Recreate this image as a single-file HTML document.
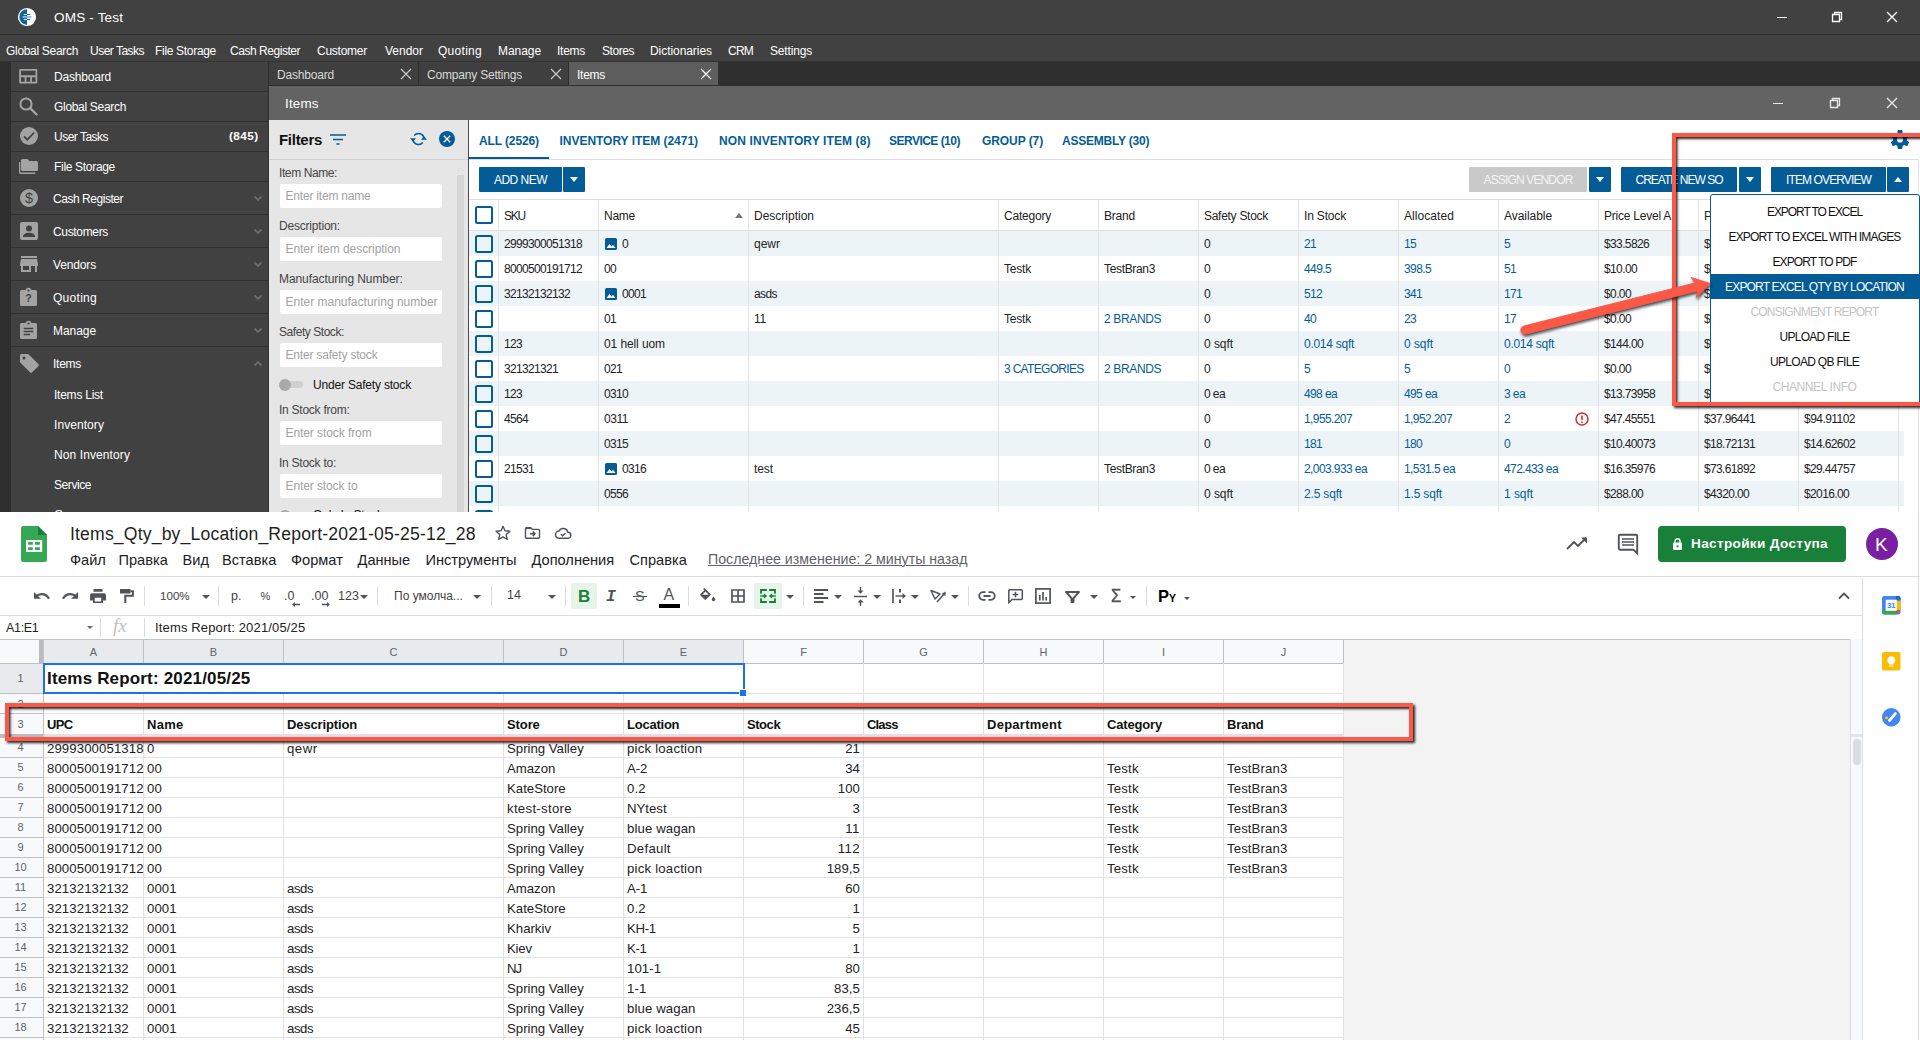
<!DOCTYPE html><html lang="en"><head><meta charset="utf-8"><title>OMS Items - Export Qty by Location</title><style>

*{box-sizing:border-box;margin:0;padding:0}
html,body{width:1920px;height:1040px;overflow:hidden;background:#fff}
body{font-family:"Liberation Sans",sans-serif;font-size:11.5px;color:#000;position:relative}
.a{position:absolute}
.t{position:absolute;white-space:nowrap;line-height:1}
svg{position:absolute;overflow:visible}
/* ---------- OMS ---------- */
#oms{left:0;top:0;width:1920px;height:512px;background:#2f2f2f;overflow:hidden}
#tbar{left:0;top:0;width:1920px;height:34px;background:#414141}
#mbar{left:0;top:35px;width:1920px;height:26px;background:#414141}
#mline{left:0;top:61px;width:1920px;height:1px;background:#333}
#mbar .t{top:10px;color:#fff;font-size:12px}
#side{left:11px;top:62px;width:257px;height:460px;background:#414141}
#side .sep{position:absolute;left:0;width:257px;height:1px;background:#313131}
#side .t{color:#fff;font-size:12px}
.tab{position:absolute;top:62px;height:23px;width:149px;background:#3f3f3f;color:#d8d8d8;font-size:12px}
.tab.sel{background:#5d5d5d;color:#fff}
.tab .t{left:8px;top:6.5px}
#wtitle{left:269px;top:86px;width:1651px;height:34px;background:#636363}
#filt{left:269px;top:120px;width:199px;height:400px;background:#e6e6e6}
#filt .lbl{color:#444;font-size:12px}
#filt .inp{position:absolute;left:11px;width:162px;height:24px;background:#fff;border-radius:2px}
#filt .inp .t{left:5.5px;top:6px;color:#a2a2a2;font-size:12px}
#main{left:469px;top:120px;width:1451px;height:400px;background:#fff}
.itab{color:#045c96;font-weight:bold;font-size:12px;top:14.7px}
.btn{position:absolute;top:47px;height:25px;background:#045c96;color:#fff;border-radius:1px;font-size:12px;text-align:center;line-height:26.5px;white-space:nowrap}
.btn.dis{background:#c9c9c9;color:#f4f4f4}
.row{position:absolute;left:0;width:1435px;height:25px}
.row.alt{background:#edf4f8}
.row .t{top:7.2px;font-size:12px;color:#222}
.hrow .t{font-size:12px;color:#222}
.row .t.b{color:#045c96}
.cb{position:absolute;left:6px;top:4px;width:18px;height:18px;border:2px solid #045c96;border-radius:2.5px}
.vl{position:absolute;width:1px;background:#e3e3e3}
.mi{position:absolute;left:-1.5px;width:210px;height:25px;text-align:center;line-height:26.4px;font-size:12px;color:#111;white-space:nowrap}
.mi.dis{color:#c4c4c4}
.mi.sel{background:#045c96;color:#fff}
/* ---------- Sheets ---------- */
#gs{left:0;top:512px;width:1920px;height:528px;background:#fff;overflow:hidden}
#gs .menu .t{top:41px;font-size:14.6px;color:#202124}
.hl{position:absolute;height:1px;background:#dadce0}
.gvl{position:absolute;width:1px;background:#e1e1e1}
.ghl{position:absolute;height:1px;background:#e1e1e1}
.ch{position:absolute;top:128px;height:23px;background:#f8f9fa;border-right:1px solid #c0c0c0;color:#5f6368;font-size:11px;text-align:center;line-height:24px}
.ch.s{background:#e8eaed}
.rh{position:absolute;left:0;width:43px;padding-right:2px;background:#f8f9fa;border-bottom:1px solid #c0c0c0;color:#5f6368;font-size:11px;text-align:center}
.c{position:absolute;white-space:nowrap;line-height:1;font-size:13.2px;color:#222}
.c.r{text-align:right}
.c.h{font-weight:bold;color:#111;font-size:13px}

</style></head><body>
<div id="oms" class="a">
<div id="tbar" class="a"></div>
<svg style="left:18px;top:8px" width="18" height="18" viewBox="0 0 18 18"><circle cx="9" cy="9" r="9.1" fill="#fff"/><path d="M9 1.3A7.7 7.7 0 0 0 9 16.7z" fill="#0a64a0"/><path d="M5.8 6.1h3.2v1h-3.2zM4.6 8.4h4.4v1.2h-4.4zM5.8 11.1h3.2v1h-3.2z" fill="#fff"/><path d="M9 6.1h3.2v1H9zM9 11.1h3.2v1H9z" fill="#0a64a0"/><path d="M9 8.4h4.4v1.2H9z" fill="#4d8fbd"/></svg>
<div class="t" style="letter-spacing:0.14px;left:54px;top:11px;color:#fff;font-size:13.6px">OMS - Test</div>
<div class="a" style="left:1777px;top:17px;width:10px;height:1.4px;background:#fff"></div><svg style="left:1832px;top:12px" width="10" height="10" viewBox="0 0 10 10"><path d="M0.5 2.5h7v7h-7zM2.5 2.5v-2h7v7h-2" fill="none" stroke="#fff" stroke-width="1.3"/></svg><svg style="left:1887px;top:12px" width="10" height="10" viewBox="0 0 10 10"><path d="M0 0L10 10M10 0L0 10" stroke="#fff" stroke-width="1.4"/></svg>
<div id="mline" class="a"></div>
<div id="mbar" class="a">
<div class="t" style="letter-spacing:-0.31px;left:6px;top:10px;">Global Search</div>
<div class="t" style="letter-spacing:-0.51px;left:90px;top:10px;">User Tasks</div>
<div class="t" style="letter-spacing:-0.31px;left:155px;top:10px;">File Storage</div>
<div class="t" style="letter-spacing:-0.46px;left:230px;top:10px;">Cash Register</div>
<div class="t" style="letter-spacing:-0.25px;left:317px;top:10px;">Customer</div>
<div class="t" style="left:385px;top:10px;">Vendor</div>
<div class="t" style="letter-spacing:0.28px;left:438px;top:10px;">Quoting</div>
<div class="t" style="letter-spacing:-0.06px;left:498px;top:10px;">Manage</div>
<div class="t" style="letter-spacing:-0.27px;left:557px;top:10px;">Items</div>
<div class="t" style="letter-spacing:-0.45px;left:602px;top:10px;">Stores</div>
<div class="t" style="letter-spacing:-0.06px;left:650px;top:10px;">Dictionaries</div>
<div class="t" style="letter-spacing:-0.78px;left:728px;top:10px;">CRM</div>
<div class="t" style="letter-spacing:-0.17px;left:770px;top:10px;">Settings</div>
</div>
<div id="side" class="a">
<svg style="left:8.25px;top:6.75px" width="18.5" height="14.5" viewBox="0 0 20 16"><path fill="#a3a3a3" d="M1.5 0h17A1.5 1.5 0 0 1 20 1.5v13a1.5 1.5 0 0 1-1.5 1.5h-17A1.5 1.5 0 0 1 0 14.5v-13A1.5 1.5 0 0 1 1.5 0zM2 2v5h16V2zM2 9v5h4V9zM8 9v5h4V9zM14 9v5h4V9z" fill-rule="evenodd"/></svg>
<div class="t" style="letter-spacing:-0.19px;left:43px;top:8.7px;">Dashboard</div>
<svg style="left:8px;top:34.5px" width="19" height="19" viewBox="0 0 19 19"><circle cx="7" cy="7" r="5.6" fill="none" stroke="#a3a3a3" stroke-width="2"/><path d="M11.2 11.2L17.5 17.5" stroke="#a3a3a3" stroke-width="2.4" stroke-linecap="round"/></svg>
<div class="t" style="letter-spacing:-0.31px;left:43px;top:38.7px;">Global Search</div>
<svg style="left:8.5px;top:65px" width="18" height="18" viewBox="0 0 18 18"><circle cx="9" cy="9" r="9" fill="#a3a3a3"/><path d="M3.9 9.3l3.4 3.4 6.9-7.2" fill="none" stroke="#414141" stroke-width="1.7"/></svg>
<div class="t" style="letter-spacing:-0.51px;left:43px;top:68.7px;">User Tasks</div>
<svg style="left:8px;top:96.5px" width="19" height="15" viewBox="0 0 19 15"><path fill="#a3a3a3" d="M3.5 0h5l2 2h7A1.5 1.5 0 0 1 19 3.5v7A1.5 1.5 0 0 1 17.5 12h-14A1.5 1.5 0 0 1 2 10.5v-9A1.5 1.5 0 0 1 3.5 0z"/><path fill="#a3a3a3" d="M0 3h1.3v10.5h15V15h-15A1.5 1.5 0 0 1 0 13.5z"/></svg>
<div class="t" style="letter-spacing:-0.31px;left:43px;top:98.7px;">File Storage</div>
<svg style="left:8.5px;top:127px" width="18" height="18" viewBox="0 0 18 18"><circle cx="9" cy="9" r="9" fill="#a3a3a3"/><text x="9" y="14" text-anchor="middle" font-family="Liberation Sans,sans-serif" font-size="14.5" fill="#414141">$</text></svg>
<div class="t" style="letter-spacing:-0.46px;left:42px;top:130.7px;">Cash Register</div>
<svg style="left:242.5px;top:134px" width="8" height="5" viewBox="0 0 8 5"><path d="M0.5 0.5L4 4L7.5 0.5" fill="none" stroke="#6b6b6b" stroke-width="1.9"/></svg>
<svg style="left:8.5px;top:160px" width="18" height="18" viewBox="0 0 18 18"><rect width="18" height="18" rx="2" fill="#a3a3a3"/><circle cx="9" cy="6.5" r="3" fill="#404040"/><path d="M3 15c0-3 3-4.2 6-4.2s6 1.2 6 4.2z" fill="#404040"/></svg>
<div class="t" style="letter-spacing:-0.34px;left:42px;top:163.7px;">Customers</div>
<svg style="left:242.5px;top:167px" width="8" height="5" viewBox="0 0 8 5"><path d="M0.5 0.5L4 4L7.5 0.5" fill="none" stroke="#6b6b6b" stroke-width="1.9"/></svg>
<svg style="left:8.5px;top:194px" width="18" height="16" viewBox="0 0 18 16"><path fill="#a3a3a3" d="M1 0h16v2H1zM0 8l1-5h16l1 5v2h-1v6h-2v-6h-4v6H1v-6H0zM3 10v4h6v-4z" fill-rule="evenodd"/></svg>
<div class="t" style="letter-spacing:-0.15px;left:42px;top:196.7px;">Vendors</div>
<svg style="left:242.5px;top:200px" width="8" height="5" viewBox="0 0 8 5"><path d="M0.5 0.5L4 4L7.5 0.5" fill="none" stroke="#6b6b6b" stroke-width="1.9"/></svg>
<svg style="left:9px;top:226px" width="17" height="18" viewBox="0 0 16 18" preserveAspectRatio="none"><path fill="#a3a3a3" d="M1.5 2H5.2a2.9 2.9 0 0 1 5.6 0H14.5A1.5 1.5 0 0 1 16 3.5v13A1.5 1.5 0 0 1 14.5 18h-13A1.5 1.5 0 0 1 0 16.5v-13A1.5 1.5 0 0 1 1.5 2z"/><text x="8" y="14.5" text-anchor="middle" font-family="Liberation Sans,sans-serif" font-weight="bold" font-size="10" fill="#404040">?</text><circle cx="8" cy="2.4" r="1" fill="#404040"/></svg>
<div class="t" style="letter-spacing:0.28px;left:42px;top:229.7px;">Quoting</div>
<svg style="left:242.5px;top:233px" width="8" height="5" viewBox="0 0 8 5"><path d="M0.5 0.5L4 4L7.5 0.5" fill="none" stroke="#6b6b6b" stroke-width="1.9"/></svg>
<svg style="left:9px;top:259px" width="17" height="18" viewBox="0 0 16 18" preserveAspectRatio="none"><path fill="#a3a3a3" d="M1.5 2H5.2a2.9 2.9 0 0 1 5.6 0H14.5A1.5 1.5 0 0 1 16 3.5v13A1.5 1.5 0 0 1 14.5 18h-13A1.5 1.5 0 0 1 0 16.5v-13A1.5 1.5 0 0 1 1.5 2z"/><path d="M3.5 7.5h9M3.5 10.5h9M3.5 13.5h6" stroke="#404040" stroke-width="1.6"/><circle cx="8" cy="2.4" r="1" fill="#404040"/></svg>
<div class="t" style="letter-spacing:-0.06px;left:42px;top:262.7px;">Manage</div>
<svg style="left:242.5px;top:266px" width="8" height="5" viewBox="0 0 8 5"><path d="M0.5 0.5L4 4L7.5 0.5" fill="none" stroke="#6b6b6b" stroke-width="1.9"/></svg>
<svg style="left:8.75px;top:291.5px" width="19" height="19" viewBox="0 0 19 19"><path fill="#a3a3a3" d="M1.5 0h6.2a1.5 1.5 0 0 1 1.06.440l9.6 9.6a1.5 1.5 0 0 1 0 2.12l-6.2 6.2a1.5 1.5 0 0 1-2.12 0l-9.6-9.6A1.5 1.5 0 0 1 0 7.7V1.5A1.5 1.5 0 0 1 1.5 0z"/><circle cx="4" cy="4" r="1.5" fill="#404040"/></svg>
<div class="t" style="letter-spacing:-0.27px;left:42px;top:295.7px;">Items</div>
<svg style="left:242.5px;top:299px" width="8" height="5" viewBox="0 0 8 5"><path d="M0.5 4.5L4 1L7.5 4.5" fill="none" stroke="#6b6b6b" stroke-width="1.9"/></svg>
<div class="t" style="letter-spacing:0.39px;left:218px;top:68.5px;font-weight:bold;font-size:11.8px">(845)</div>
<div class="sep" style="top:29px"></div>
<div class="sep" style="top:59px"></div>
<div class="sep" style="top:89px"></div>
<div class="sep" style="top:119px"></div>
<div class="sep" style="top:152px"></div>
<div class="sep" style="top:185px"></div>
<div class="sep" style="top:218px"></div>
<div class="sep" style="top:251px"></div>
<div class="sep" style="top:284px"></div>
<div class="t" style="letter-spacing:-0.24px;left:43px;top:326.7px;">Items List</div>
<div class="t" style="letter-spacing:0.07px;left:43px;top:356.7px;">Inventory</div>
<div class="t" style="letter-spacing:0.10px;left:43px;top:386.7px;">Non Inventory</div>
<div class="t" style="letter-spacing:-0.43px;left:43px;top:416.7px;">Service</div>
<div class="t" style="letter-spacing:-0.07px;left:43px;top:446.7px;">Group</div>
</div>
<div class="tab" style="left:269px"><div class="t" style="letter-spacing:-0.19px;">Dashboard</div><svg style="left:132px;top:7px" width="10" height="10" viewBox="0 0 10 10"><path d="M0 0L10 10M10 0L0 10" stroke="#c8c8c8" stroke-width="1.2"/></svg></div>
<div class="tab" style="left:419px"><div class="t" style="letter-spacing:-0.19px;">Company Settings</div><svg style="left:132px;top:7px" width="10" height="10" viewBox="0 0 10 10"><path d="M0 0L10 10M10 0L0 10" stroke="#c8c8c8" stroke-width="1.2"/></svg></div>
<div class="tab sel" style="left:569px"><div class="t" style="letter-spacing:-0.27px;">Items</div><svg style="left:132px;top:7px" width="10" height="10" viewBox="0 0 10 10"><path d="M0 0L10 10M10 0L0 10" stroke="#fff" stroke-width="1.2"/></svg></div>
<div id="wtitle" class="a"><div class="t" style="letter-spacing:0.20px;left:16px;top:11px;color:#fff;font-size:13.4px">Items</div></div>
<div class="a" style="left:1773px;top:103px;width:10px;height:1.4px;background:#e8e8e8"></div><svg style="left:1830px;top:98px" width="10" height="10" viewBox="0 0 10 10"><path d="M0.5 2.5h7v7h-7zM2.5 2.5v-2h7v7h-2" fill="none" stroke="#e8e8e8" stroke-width="1.3"/></svg><svg style="left:1887px;top:98px" width="10" height="10" viewBox="0 0 10 10"><path d="M0 0L10 10M10 0L0 10" stroke="#e8e8e8" stroke-width="1.4"/></svg>
<div id="filt" class="a">
<div class="t" style="letter-spacing:-0.29px;left:10px;top:12px;font-weight:bold;font-size:15px;color:#111">Filters</div>
<svg style="left:61px;top:13.7px" width="16" height="11" viewBox="0 0 16 11"><path d="M0 1h16M3 5.5h10M6.5 10h3" stroke="#045c96" stroke-width="1.7"/></svg>
<svg style="left:141px;top:11px" width="17" height="16" viewBox="0 0 17 16"><g transform="translate(0 16) scale(1 -1)"><path d="M3 8a5.5 5.5 0 0 1 9.8-3.4M14 8a5.5 5.5 0 0 1-9.8 3.4" fill="none" stroke="#045c96" stroke-width="1.6"/><path d="M0 8.8L3 5.2l3 3.6zM11 7.2L14 10.8l3-3.6z" fill="#045c96"/></g></svg>
<svg style="left:170px;top:11px" width="16" height="16" viewBox="0 0 16 16"><circle cx="8" cy="8" r="8" fill="#045c96"/><path d="M4.8 4.8l6.4 6.4M11.2 4.8l-6.4 6.4" stroke="#fff" stroke-width="1.3"/></svg>
<div class="a" style="left:0;top:39px;width:199px;height:1px;background:#d2d2d2"></div>
<div class="a" style="left:188px;top:55px;width:7px;height:345px;background:#d6d6d6"></div>
<svg style="left:188px;top:47px" width="7" height="4" viewBox="0 0 7 4"><path d="M0 4L3.5 0.5L7 4" fill="none" stroke="#dcdcdc" stroke-width="1"/></svg>
<div class="t lbl" style="letter-spacing:-0.40px;left:10px;top:46.6px;">Item Name:</div>
<div class="inp" style="top:64px"><div class="t" style="letter-spacing:-0.20px;">Enter item name</div></div>
<div class="t lbl" style="letter-spacing:-0.20px;left:10px;top:99.6px;">Description:</div>
<div class="inp" style="top:117px"><div class="t" style="letter-spacing:-0.05px;">Enter item description</div></div>
<div class="t lbl" style="letter-spacing:-0.08px;left:10px;top:152.6px;">Manufacturing Number:</div>
<div class="inp" style="top:170px"><div class="t">Enter manufacturing number</div></div>
<div class="t lbl" style="letter-spacing:-0.45px;left:10px;top:205.6px;">Safety Stock:</div>
<div class="inp" style="top:223px"><div class="t" style="letter-spacing:-0.19px;">Enter safety stock</div></div>
<div class="a" style="left:12px;top:261px;width:22px;height:7px;border-radius:4px;background:#cfcfcf"></div>
<div class="a" style="left:10px;top:258.5px;width:12px;height:12px;border-radius:6px;background:#aaa"></div>
<div class="t" style="letter-spacing:-0.19px;left:44px;top:259px;font-size:12px;color:#111">Under Safety stock</div>
<div class="t lbl" style="letter-spacing:-0.25px;left:10px;top:283.6px;">In Stock from:</div>
<div class="inp" style="top:301px"><div class="t" style="letter-spacing:-0.08px;">Enter stock from</div></div>
<div class="t lbl" style="letter-spacing:-0.25px;left:10px;top:336.6px;">In Stock to:</div>
<div class="inp" style="top:354px"><div class="t" style="letter-spacing:-0.10px;">Enter stock to</div></div>
<div class="a" style="left:12px;top:392px;width:22px;height:7px;border-radius:4px;background:#cfcfcf"></div>
<div class="a" style="left:10px;top:389.5px;width:12px;height:12px;border-radius:6px;background:#aaa"></div>
<div class="t" style="letter-spacing:-0.11px;left:44px;top:389.3px;font-size:12px;color:#111">Only In Stock</div>
</div>
<div id="main" class="a">
<div class="a" style="left:-1px;top:0;width:1px;height:400px;background:#4a4a4a"></div>
<div class="t itab" style="letter-spacing:-0.12px;left:10px;top:14.7px;">ALL (2526)</div>
<div class="t itab" style="letter-spacing:-0.03px;left:90.5px;top:14.7px;">INVENTORY ITEM (2471)</div>
<div class="t itab" style="letter-spacing:0.11px;left:250px;top:14.7px;">NON INVENTORY ITEM (8)</div>
<div class="t itab" style="letter-spacing:-0.52px;left:420px;top:14.7px;">SERVICE (10)</div>
<div class="t itab" style="letter-spacing:-0.08px;left:513px;top:14.7px;">GROUP (7)</div>
<div class="t itab" style="letter-spacing:-0.22px;left:593px;top:14.7px;">ASSEMBLY (30)</div>
<div class="a" style="left:0;top:39px;width:1450px;height:1px;background:#dedede"></div>
<div class="a" style="left:1449px;top:39px;width:1px;height:361px;background:#e2e2e2"></div>
<div class="a" style="left:0;top:37px;width:80px;height:2px;background:#045c96"></div>
<svg style="left:1422px;top:10px" width="18" height="19" viewBox="-9 -9.5 18 19"><g fill="#045c96"><rect x="-2.5" y="-9.5" width="5" height="19" rx="1.2" transform="rotate(0)"/><rect x="-2.5" y="-9.5" width="5" height="19" rx="1.2" transform="rotate(60)"/><rect x="-2.5" y="-9.5" width="5" height="19" rx="1.2" transform="rotate(120)"/><circle r="7"/></g><circle r="3.1" fill="#fff"/></svg>
<div class="btn" style="letter-spacing:-0.52px;left:10px;width:83px">ADD NEW</div>
<div class="btn" style="left:94px;width:22px"></div>
<svg style="left:101px;top:57px" width="8" height="5" viewBox="0 0 8 5"><path d="M0 0L4 5L8 0z" fill="#fff"/></svg>
<div class="btn dis" style="letter-spacing:-0.85px;left:1000px;width:118px">ASSIGN VENDOR</div>
<div class="btn" style="left:1120px;width:22px"></div>
<svg style="left:1127px;top:57px" width="8" height="5" viewBox="0 0 8 5"><path d="M0 0L4 5L8 0z" fill="#fff"/></svg>
<div class="btn" style="letter-spacing:-0.98px;left:1152px;width:116px">CREATE NEW SO</div>
<div class="btn" style="left:1270px;width:22px"></div>
<svg style="left:1277px;top:57px" width="8" height="5" viewBox="0 0 8 5"><path d="M0 0L4 5L8 0z" fill="#fff"/></svg>
<div class="btn" style="letter-spacing:-0.88px;left:1302px;width:115px">ITEM OVERVIEW</div>
<div class="btn" style="left:1418px;width:22px"></div>
<svg style="left:1425px;top:57px" width="8" height="5" viewBox="0 0 8 5"><path d="M0 5L4 0L8 5z" fill="#fff"/></svg>
<div class="a" style="left:0;top:79px;width:1449px;height:1px;background:#dedede"></div>
<div class="a" style="left:0;top:110px;width:1449px;height:1px;background:#dedede"></div>
<div class="hrow a" style="left:0;top:80px;width:1449px;height:30px">
<div class="cb" style="top:6px"></div>
<div class="t" style="letter-spacing:-1.20px;left:35px;top:9.8px;">SKU</div>
<div class="t" style="letter-spacing:-0.25px;left:135px;top:9.8px;">Name</div>
<div class="t" style="left:285px;top:9.8px;">Description</div>
<div class="t" style="letter-spacing:-0.21px;left:535px;top:9.8px;">Category</div>
<div class="t" style="letter-spacing:-0.21px;left:635px;top:9.8px;">Brand</div>
<div class="t" style="letter-spacing:-0.28px;left:735px;top:9.8px;">Safety Stock</div>
<div class="t" style="letter-spacing:-0.17px;left:835px;top:9.8px;">In Stock</div>
<div class="t" style="letter-spacing:0.07px;left:935px;top:9.8px;">Allocated</div>
<div class="t" style="letter-spacing:-0.05px;left:1035px;top:9.8px;">Available</div>
<div class="t" style="letter-spacing:-0.23px;left:1135px;top:9.8px;">Price Level A</div>
<div class="t" style="letter-spacing:-1.02px;left:1235px;top:9.8px;">P</div>
<svg style="left:266px;top:12.5px" width="8" height="5" viewBox="0 0 8 5"><path d="M0 5L4 0L8 5z" fill="#777"/></svg>
</div>
<div class="row alt" style="top:111px"><div class="cb"></div>
<div class="t" style="letter-spacing:-0.67px;left:35px;top:7.2px;">2999300051318</div>
<svg style="left:136px;top:6.5px" width="12" height="12" viewBox="0 0 12 12"><rect width="12" height="12" rx="1.5" fill="#045c96"/><path d="M1.5 10l3-4 2 2.5 1.5-1.8L10.5 10z" fill="#fff"/></svg>
<div class="t" style="letter-spacing:-0.69px;left:153px;top:7.2px;">0</div>
<div class="t" style="left:285px;top:7.2px;">qewr</div>
<div class="t" style="letter-spacing:-0.69px;left:735px;top:7.2px;">0</div>
<div class="t b" style="letter-spacing:-0.68px;left:835px;top:7.2px;">21</div>
<div class="t b" style="letter-spacing:-0.68px;left:935px;top:7.2px;">15</div>
<div class="t b" style="letter-spacing:-0.69px;left:1035px;top:7.2px;">5</div>
<div class="t" style="letter-spacing:-0.63px;left:1135px;top:7.2px;">$33.5826</div>
<div class="t" style="letter-spacing:-0.69px;left:1235px;top:7.2px;">$</div>
</div>
<div class="row" style="top:136px"><div class="cb"></div>
<div class="t" style="letter-spacing:-0.67px;left:35px;top:7.2px;">8000500191712</div>
<div class="t" style="letter-spacing:-0.68px;left:135px;top:7.2px;">00</div>
<div class="t" style="letter-spacing:-0.20px;left:535px;top:7.2px;">Testk</div>
<div class="t" style="letter-spacing:-0.34px;left:635px;top:7.2px;">TestBran3</div>
<div class="t" style="letter-spacing:-0.69px;left:735px;top:7.2px;">0</div>
<div class="t b" style="letter-spacing:-0.61px;left:835px;top:7.2px;">449.5</div>
<div class="t b" style="letter-spacing:-0.61px;left:935px;top:7.2px;">398.5</div>
<div class="t b" style="letter-spacing:-0.68px;left:1035px;top:7.2px;">51</div>
<div class="t" style="letter-spacing:-0.62px;left:1135px;top:7.2px;">$10.00</div>
<div class="t" style="letter-spacing:-0.69px;left:1235px;top:7.2px;">$</div>
</div>
<div class="row alt" style="top:161px"><div class="cb"></div>
<div class="t" style="letter-spacing:-0.67px;left:35px;top:7.2px;">32132132132</div>
<svg style="left:136px;top:6.5px" width="12" height="12" viewBox="0 0 12 12"><rect width="12" height="12" rx="1.5" fill="#045c96"/><path d="M1.5 10l3-4 2 2.5 1.5-1.8L10.5 10z" fill="#fff"/></svg>
<div class="t" style="letter-spacing:-0.68px;left:153px;top:7.2px;">0001</div>
<div class="t" style="letter-spacing:-0.59px;left:285px;top:7.2px;">asds</div>
<div class="t" style="letter-spacing:-0.69px;left:735px;top:7.2px;">0</div>
<div class="t b" style="letter-spacing:-0.68px;left:835px;top:7.2px;">512</div>
<div class="t b" style="letter-spacing:-0.68px;left:935px;top:7.2px;">341</div>
<div class="t b" style="letter-spacing:-0.68px;left:1035px;top:7.2px;">171</div>
<div class="t" style="letter-spacing:-0.61px;left:1135px;top:7.2px;">$0.00</div>
<div class="t" style="letter-spacing:-0.69px;left:1235px;top:7.2px;">$</div>
</div>
<div class="row" style="top:186px"><div class="cb"></div>
<div class="t" style="letter-spacing:-0.68px;left:135px;top:7.2px;">01</div>
<div class="t" style="letter-spacing:-0.23px;left:285px;top:7.2px;">11</div>
<div class="t" style="letter-spacing:-0.20px;left:535px;top:7.2px;">Testk</div>
<div class="t  b" style="letter-spacing:-0.35px;left:635px;top:7.2px;">2 BRANDS</div>
<div class="t" style="letter-spacing:-0.69px;left:735px;top:7.2px;">0</div>
<div class="t b" style="letter-spacing:-0.68px;left:835px;top:7.2px;">40</div>
<div class="t b" style="letter-spacing:-0.68px;left:935px;top:7.2px;">23</div>
<div class="t b" style="letter-spacing:-0.68px;left:1035px;top:7.2px;">17</div>
<div class="t" style="letter-spacing:-0.61px;left:1135px;top:7.2px;">$0.00</div>
<div class="t" style="letter-spacing:-0.69px;left:1235px;top:7.2px;">$</div>
</div>
<div class="row alt" style="top:211px"><div class="cb"></div>
<div class="t" style="letter-spacing:-0.68px;left:35px;top:7.2px;">123</div>
<div class="t" style="letter-spacing:-0.10px;left:135px;top:7.2px;">01 hell uom</div>
<div class="t" style="letter-spacing:-0.06px;left:735px;top:7.2px;">0 sqft</div>
<div class="t b" style="letter-spacing:-0.27px;left:835px;top:7.2px;">0.014 sqft</div>
<div class="t b" style="letter-spacing:-0.06px;left:935px;top:7.2px;">0 sqft</div>
<div class="t b" style="letter-spacing:-0.27px;left:1035px;top:7.2px;">0.014 sqft</div>
<div class="t" style="letter-spacing:-0.63px;left:1135px;top:7.2px;">$144.00</div>
<div class="t" style="letter-spacing:-0.69px;left:1235px;top:7.2px;">$</div>
</div>
<div class="row" style="top:236px"><div class="cb"></div>
<div class="t" style="letter-spacing:-0.68px;left:35px;top:7.2px;">321321321</div>
<div class="t" style="letter-spacing:-0.68px;left:135px;top:7.2px;">021</div>
<div class="t  b" style="letter-spacing:-0.69px;left:535px;top:7.2px;">3 CATEGORIES</div>
<div class="t  b" style="letter-spacing:-0.35px;left:635px;top:7.2px;">2 BRANDS</div>
<div class="t" style="letter-spacing:-0.69px;left:735px;top:7.2px;">0</div>
<div class="t b" style="letter-spacing:-0.69px;left:835px;top:7.2px;">5</div>
<div class="t b" style="letter-spacing:-0.69px;left:935px;top:7.2px;">5</div>
<div class="t b" style="letter-spacing:-0.69px;left:1035px;top:7.2px;">0</div>
<div class="t" style="letter-spacing:-0.61px;left:1135px;top:7.2px;">$0.00</div>
<div class="t" style="letter-spacing:-0.69px;left:1235px;top:7.2px;">$</div>
</div>
<div class="row alt" style="top:261px"><div class="cb"></div>
<div class="t" style="letter-spacing:-0.68px;left:35px;top:7.2px;">123</div>
<div class="t" style="letter-spacing:-0.68px;left:135px;top:7.2px;">0310</div>
<div class="t" style="letter-spacing:-0.59px;left:735px;top:7.2px;">0 ea</div>
<div class="t b" style="letter-spacing:-0.62px;left:835px;top:7.2px;">498 ea</div>
<div class="t b" style="letter-spacing:-0.62px;left:935px;top:7.2px;">495 ea</div>
<div class="t b" style="letter-spacing:-0.59px;left:1035px;top:7.2px;">3 ea</div>
<div class="t" style="letter-spacing:-0.64px;left:1135px;top:7.2px;">$13.73958</div>
<div class="t" style="letter-spacing:-0.69px;left:1235px;top:7.2px;">$</div>
</div>
<div class="row" style="top:286px"><div class="cb"></div>
<div class="t" style="letter-spacing:-0.68px;left:35px;top:7.2px;">4564</div>
<div class="t" style="letter-spacing:-0.45px;left:135px;top:7.2px;">0311</div>
<div class="t" style="letter-spacing:-0.69px;left:735px;top:7.2px;">0</div>
<div class="t b" style="letter-spacing:-0.60px;left:835px;top:7.2px;">1,955.207</div>
<div class="t b" style="letter-spacing:-0.60px;left:935px;top:7.2px;">1,952.207</div>
<div class="t b" style="letter-spacing:-0.69px;left:1035px;top:7.2px;">2</div>
<div class="t" style="letter-spacing:-0.64px;left:1135px;top:7.2px;">$47.45551</div>
<div class="t" style="letter-spacing:-0.64px;left:1235px;top:7.2px;">$37.96441</div>
<div class="t" style="letter-spacing:-0.54px;left:1335px;top:7.2px;">$94.91102</div>
<svg style="left:1106px;top:6px" width="14" height="14" viewBox="0 0 14 14"><circle cx="7" cy="7" r="6" fill="#fff" stroke="#d32f2f" stroke-width="1.5"/><path d="M7 3.5v4.5M7 9.5v1.5" stroke="#d32f2f" stroke-width="1.6"/></svg>
</div>
<div class="row alt" style="top:311px"><div class="cb"></div>
<div class="t" style="letter-spacing:-0.68px;left:135px;top:7.2px;">0315</div>
<div class="t" style="letter-spacing:-0.69px;left:735px;top:7.2px;">0</div>
<div class="t b" style="letter-spacing:-0.68px;left:835px;top:7.2px;">181</div>
<div class="t b" style="letter-spacing:-0.68px;left:935px;top:7.2px;">180</div>
<div class="t b" style="letter-spacing:-0.69px;left:1035px;top:7.2px;">0</div>
<div class="t" style="letter-spacing:-0.64px;left:1135px;top:7.2px;">$10.40073</div>
<div class="t" style="letter-spacing:-0.64px;left:1235px;top:7.2px;">$18.72131</div>
<div class="t" style="letter-spacing:-0.64px;left:1335px;top:7.2px;">$14.62602</div>
</div>
<div class="row" style="top:336px"><div class="cb"></div>
<div class="t" style="letter-spacing:-0.68px;left:35px;top:7.2px;">21531</div>
<svg style="left:136px;top:6.5px" width="12" height="12" viewBox="0 0 12 12"><rect width="12" height="12" rx="1.5" fill="#045c96"/><path d="M1.5 10l3-4 2 2.5 1.5-1.8L10.5 10z" fill="#fff"/></svg>
<div class="t" style="letter-spacing:-0.68px;left:153px;top:7.2px;">0316</div>
<div class="t" style="letter-spacing:-0.09px;left:285px;top:7.2px;">test</div>
<div class="t" style="letter-spacing:-0.34px;left:635px;top:7.2px;">TestBran3</div>
<div class="t" style="letter-spacing:-0.59px;left:735px;top:7.2px;">0 ea</div>
<div class="t b" style="letter-spacing:-0.59px;left:835px;top:7.2px;">2,003.933 ea</div>
<div class="t b" style="letter-spacing:-0.57px;left:935px;top:7.2px;">1,531.5 ea</div>
<div class="t b" style="letter-spacing:-0.61px;left:1035px;top:7.2px;">472.433 ea</div>
<div class="t" style="letter-spacing:-0.64px;left:1135px;top:7.2px;">$16.35976</div>
<div class="t" style="letter-spacing:-0.64px;left:1235px;top:7.2px;">$73.61892</div>
<div class="t" style="letter-spacing:-0.64px;left:1335px;top:7.2px;">$29.44757</div>
</div>
<div class="row alt" style="top:361px"><div class="cb"></div>
<div class="t" style="letter-spacing:-0.68px;left:135px;top:7.2px;">0556</div>
<div class="t" style="letter-spacing:-0.06px;left:735px;top:7.2px;">0 sqft</div>
<div class="t b" style="letter-spacing:-0.17px;left:835px;top:7.2px;">2.5 sqft</div>
<div class="t b" style="letter-spacing:-0.17px;left:935px;top:7.2px;">1.5 sqft</div>
<div class="t b" style="letter-spacing:-0.06px;left:1035px;top:7.2px;">1 sqft</div>
<div class="t" style="letter-spacing:-0.63px;left:1135px;top:7.2px;">$288.00</div>
<div class="t" style="letter-spacing:-0.63px;left:1235px;top:7.2px;">$4320.00</div>
<div class="t" style="letter-spacing:-0.63px;left:1335px;top:7.2px;">$2016.00</div>
</div>
<div class="row" style="top:386px"><div class="cb"></div>
</div>
<div class="vl" style="left:29px;top:80px;height:320px"></div>
<div class="vl" style="left:129px;top:80px;height:320px"></div>
<div class="vl" style="left:279px;top:80px;height:320px"></div>
<div class="vl" style="left:529px;top:80px;height:320px"></div>
<div class="vl" style="left:629px;top:80px;height:320px"></div>
<div class="vl" style="left:729px;top:80px;height:320px"></div>
<div class="vl" style="left:829px;top:80px;height:320px"></div>
<div class="vl" style="left:929px;top:80px;height:320px"></div>
<div class="vl" style="left:1029px;top:80px;height:320px"></div>
<div class="vl" style="left:1129px;top:80px;height:320px"></div>
<div class="vl" style="left:1229px;top:80px;height:320px"></div>
<div class="vl" style="left:1329px;top:80px;height:320px"></div>
<div class="vl" style="left:1429px;top:80px;height:320px"></div>
</div>
<div class="a" style="left:1710px;top:194px;width:210px;height:212px;background:#fff;border:1.5px solid #045c96;border-radius:3px">
<div class="mi " style="letter-spacing:-1.08px;top:4px">EXPORT TO EXCEL</div>
<div class="mi " style="letter-spacing:-0.84px;top:29px">EXPORT TO EXCEL WITH IMAGES</div>
<div class="mi " style="letter-spacing:-0.91px;top:54px">EXPORT TO PDF</div>
<div class="mi sel" style="letter-spacing:-0.82px;top:79px">EXPORT EXCEL QTY BY LOCATION</div>
<div class="mi dis" style="letter-spacing:-0.83px;top:104px">CONSIGNMENT REPORT</div>
<div class="mi " style="letter-spacing:-0.73px;top:129px">UPLOAD FILE</div>
<div class="mi " style="letter-spacing:-0.69px;top:154px">UPLOAD QB FILE</div>
<div class="mi dis" style="letter-spacing:-0.41px;top:179px">CHANNEL INFO</div>
</div>
<div class="a" style="left:1672px;top:133px;width:260px;height:273px;border:4px solid #fb5848;box-shadow:1.5px 2px 2.5px rgba(0,0,0,.85),inset 1.5px 2px 2.5px rgba(0,0,0,.85)"></div>
<svg style="left:0;top:0;filter:drop-shadow(1.5px 2.5px 1.5px rgba(0,0,0,.7))" width="1920" height="512" viewBox="0 0 1920 512"><path d="M1524 326L1695.9 282.8L1691 277.5L1710 283.5L1696.1 297.8L1697.9 290.8L1526 334A4.1 4.1 0 0 1 1524 326z" fill="#fb5848" stroke="#fb5848" stroke-width="1" stroke-linejoin="round"/></svg>
</div>
<div id="gs" class="a">
<svg style="left:21px;top:14px" width="26" height="36" viewBox="0 0 26 36"><path d="M2.5 0H17L26 9V33.5A2.5 2.5 0 0 1 23.5 36h-21A2.5 2.5 0 0 1 0 33.5v-31A2.5 2.5 0 0 1 2.5 0z" fill="#34a853"/><path d="M17 0l9 9h-9z" fill="#188038"/><path d="M5 14h16.2v12H5zM7.1 16v2.7h4.7V16zM14 16v2.7h4.9V16zM7.1 21.2v2.7h4.7v-2.7zM14 21.2v2.7h4.9v-2.7z" fill="#fff" fill-rule="evenodd"/></svg>
<div class="t" style="left:70px;top:13.5px;font-size:17.6px;color:#1f1f1f;letter-spacing:.17px">Items_Qty_by_Location_Report-2021-05-25-12_28</div>
<svg style="left:495px;top:12.8px" width="16" height="15" viewBox="0 0 16 15"><path d="M8 1.3l2 4.5 4.9.500-3.7 3.3 1.1 4.8L8 11.9l-4.3 2.5 1.1-4.8L1.1 6.3 6 5.8z" fill="none" stroke="#50545a" stroke-width="1.4" stroke-linejoin="round"/></svg>
<svg style="left:525px;top:15px" width="15" height="12" viewBox="0 0 15 12"><path d="M1.5 0.7h4.3l1.5 1.7h6.2a1 1 0 0 1 1 1v6.9a1 1 0 0 1-1 1h-12a1 1 0 0 1-1-1V1.7a1 1 0 0 1 1-1z" fill="none" stroke="#50545a" stroke-width="1.4"/><path d="M0.5 0.7h5.5l1 1.2h-6.5z" fill="#50545a"/><path d="M4.8 6.8h5M7.7 4.5l2.3 2.3-2.3 2.3" fill="none" stroke="#50545a" stroke-width="1.5"/></svg>
<svg style="left:555px;top:15px" width="17" height="12" viewBox="0 0 17 12"><path d="M4.3 11.3a3.6 3.6 0 0 1-.400-7.2 4.8 4.8 0 0 1 9 1.2 3 3 0 0 1-.200 6z" fill="none" stroke="#50545a" stroke-width="1.5"/><path d="M6 7.2l1.6 1.6 2.9-2.9" fill="none" stroke="#50545a" stroke-width="1.4"/></svg>
<div class="menu">
<div class="t" style="left:70px;top:41px;">Файл</div>
<div class="t" style="left:118.5px;top:41px;">Правка</div>
<div class="t" style="left:182.5px;top:41px;">Вид</div>
<div class="t" style="left:222px;top:41px;">Вставка</div>
<div class="t" style="left:291px;top:41px;">Формат</div>
<div class="t" style="left:357.5px;top:41px;">Данные</div>
<div class="t" style="left:425.5px;top:41px;">Инструменты</div>
<div class="t" style="left:531.5px;top:41px;">Дополнения</div>
<div class="t" style="left:629.5px;top:41px;">Справка</div>
<div class="t" style="left:708px;top:40px;color:#5f6368;text-decoration:underline;font-size:14.2px">Последнее изменение: 2 минуты назад</div>
</div>
<svg style="left:1566px;top:25px" width="22" height="13" viewBox="0 0 22 13"><path d="M1 12l7-7 4 4 8-8" fill="none" stroke="#50545a" stroke-width="1.9"/><path d="M15 0.5h6v6z" fill="#50545a"/></svg>
<svg style="left:1618px;top:22px" width="20" height="20" viewBox="0 0 20 20"><path d="M2 0.8h16a1.2 1.2 0 0 1 1.2 1.2v17.5l-3.8-3.8H2a1.2 1.2 0 0 1-1.2-1.2V2A1.2 1.2 0 0 1 2 0.8z" fill="none" stroke="#50545a" stroke-width="1.9"/><path d="M4 5h12M4 8h12M4 11h12" stroke="#50545a" stroke-width="1.7"/></svg>
<div class="a" style="left:1658px;top:14px;width:188px;height:36px;background:#188038;border-radius:4px"></div>
<svg style="left:1673px;top:26px" width="9" height="12" viewBox="0 0 9 12"><rect x="0" y="4.5" width="9" height="7.5" rx="1" fill="#fff"/><path d="M2 5V3.3a2.5 2.5 0 0 1 5 0V5" fill="none" stroke="#fff" stroke-width="1.4"/><circle cx="4.5" cy="8.3" r="1.1" fill="#188038"/></svg>
<div class="t" style="left:1691px;top:25px;color:#fff;font-weight:bold;font-size:13.6px;letter-spacing:.33px">Настройки Доступа</div>
<div class="a" style="left:1866px;top:16px;width:32px;height:32px;border-radius:16px;background:#7b1fa2"></div>
<div class="t" style="left:1875px;top:23px;color:#fff;font-size:19px">K</div>
<div class="hl" style="left:0;top:64px;width:1920px"></div>
<svg style="left:34px;top:78.5px" width="16" height="9" viewBox="0 0 16 9"><path d="M2 5.5C5.5 2 12 2 15 7.8" fill="none" stroke="#50545a" stroke-width="2.2"/><path d="M0 1v6.8h6.8z" fill="#50545a"/></svg>
<svg style="left:62px;top:78.5px" width="16" height="9" viewBox="0 0 16 9"><path d="M14 5.5C10.5 2 4 2 1 7.8" fill="none" stroke="#50545a" stroke-width="2.2"/><path d="M16 1v6.8H9.2z" fill="#50545a"/></svg>
<svg style="left:90px;top:77px" width="16" height="14" viewBox="0 0 16 14"><path d="M3.5 0h9v2.8h-9zM2 4.2h12a2 2 0 0 1 2 2V11.5h-3v2.5H3v-2.5H0V6.2a2 2 0 0 1 2-2zM4.8 8.8v3.6h6.4v-3.6z" fill="#50545a" fill-rule="evenodd"/></svg>
<svg style="left:120px;top:77px" width="14" height="15" viewBox="0 0 14 15"><path d="M0 0h10.5v4.5H0z" fill="#50545a"/><path d="M10.5 2.2h2.4v4.6H5.3V14" fill="none" stroke="#50545a" stroke-width="2"/></svg>
<div class="a" style="left:144px;top:74px;width:1px;height:20px;background:#dadce0"></div>
<div class="t" style="left:160px;top:77.5px;font-size:11.6px;color:#444">100%</div>
<svg style="left:202px;top:83px" width="8" height="4" viewBox="0 0 8 4"><path d="M0 0L4 4L8 0z" fill="#50545a"/></svg>
<div class="a" style="left:218px;top:74px;width:1px;height:20px;background:#dadce0"></div>
<div class="t" style="left:231px;top:78px;font-size:12.5px;color:#444">р.</div>
<div class="t" style="left:260.5px;top:78.5px;font-size:11px;color:#444">%</div>
<div class="t" style="left:284px;top:78px;font-size:12.5px;color:#444">.0</div>
<svg style="left:292px;top:89.5px" width="8" height="5" viewBox="0 0 8 5"><path d="M2 2.5h6" stroke="#50545a" stroke-width="1.5"/><path d="M0 2.5L3 0v5z" fill="#50545a"/></svg>
<div class="t" style="left:311px;top:78px;font-size:12.5px;color:#444">.00</div>
<svg style="left:322px;top:89.5px" width="8" height="5" viewBox="0 0 8 5"><path d="M0 2.5h6" stroke="#50545a" stroke-width="1.5"/><path d="M8 2.5L5 0v5z" fill="#50545a"/></svg>
<div class="t" style="left:338px;top:78px;font-size:12.5px;color:#444">123</div>
<svg style="left:360px;top:83px" width="8" height="4" viewBox="0 0 8 4"><path d="M0 0L4 4L8 0z" fill="#50545a"/></svg>
<div class="a" style="left:377px;top:74px;width:1px;height:20px;background:#dadce0"></div>
<div class="t" style="left:394px;top:78px;font-size:12px;color:#444">По умолча...</div>
<svg style="left:473px;top:83px" width="8" height="4" viewBox="0 0 8 4"><path d="M0 0L4 4L8 0z" fill="#50545a"/></svg>
<div class="a" style="left:491px;top:74px;width:1px;height:20px;background:#dadce0"></div>
<div class="t" style="left:507px;top:77px;font-size:12.5px;color:#444">14</div>
<svg style="left:548px;top:83px" width="8" height="4" viewBox="0 0 8 4"><path d="M0 0L4 4L8 0z" fill="#50545a"/></svg>
<div class="a" style="left:565px;top:74px;width:1px;height:20px;background:#dadce0"></div>
<div class="a" style="left:571px;top:71px;width:26px;height:26px;border-radius:2px;background:#e6f4ea"></div>
<div class="t" style="left:578px;top:76px;font-weight:bold;font-size:17px;color:#188038">B</div>
<div class="t" style="left:606px;top:76.5px;font-style:italic;font-weight:bold;font-size:16.5px;color:#50545a;font-family:Liberation Mono,monospace">I</div>
<div class="t" style="left:635px;top:77px;font-size:14.5px;color:#50545a">S</div>
<div class="a" style="left:633px;top:83.5px;width:14px;height:1.7px;background:#50545a"></div>
<div class="t" style="left:663.5px;top:74.5px;font-size:16px;color:#50545a">A</div>
<div class="a" style="left:659px;top:92px;width:21px;height:4px;background:#000"></div>
<div class="a" style="left:688px;top:74px;width:1px;height:20px;background:#dadce0"></div>
<svg style="left:700px;top:76px" width="16" height="14" viewBox="0 0 16 14"><path d="M4.5 0l6.5 6.5-5 5a1 1 0 0 1-1.4 0L0.5 7.4a1 1 0 0 1 0-1.4L4.3 2.2 3 0.9z" fill="#50545a"/><path d="M2.3 6.7l3.2-3.2 3.2 3.2z" fill="#fff"/><path d="M13.5 8.5s1.7 2 1.7 3a1.7 1.7 0 0 1-3.4 0c0-1 1.7-3 1.7-3z" fill="#50545a"/></svg>
<svg style="left:731px;top:77px" width="14" height="14" viewBox="0 0 14 14"><path d="M1 1h12v12H1zM7 1v12M1 7h12" fill="none" stroke="#50545a" stroke-width="1.7"/></svg>
<div class="a" style="left:754px;top:71px;width:28px;height:26px;border-radius:2px;background:#e6f4ea"></div>
<svg style="left:760px;top:77px" width="16" height="14" viewBox="0 0 16 14"><path d="M1 4.8V1h5.8M9.2 1H15v3.8M1 9.2V13h5.8M9.2 13H15V9.2" fill="none" stroke="#188038" stroke-width="1.8"/><path d="M0.2 7h4M15.8 7h-4" stroke="#188038" stroke-width="1.6"/><path d="M7.2 7L3.8 4.3v5.4zM8.8 7l3.4-2.7v5.4z" fill="#188038"/></svg>
<svg style="left:786px;top:83px" width="8" height="4" viewBox="0 0 8 4"><path d="M0 0L4 4L8 0z" fill="#50545a"/></svg>
<div class="a" style="left:803px;top:74px;width:1px;height:20px;background:#dadce0"></div>
<svg style="left:814px;top:77px" width="14" height="14" viewBox="0 0 14 14"><path d="M0 1h14M0 5h9.5M0 9h14M0 13h9.5" stroke="#50545a" stroke-width="1.8"/></svg>
<svg style="left:834px;top:83px" width="8" height="4" viewBox="0 0 8 4"><path d="M0 0L4 4L8 0z" fill="#50545a"/></svg>
<svg style="left:854px;top:75px" width="13" height="19" viewBox="0 0 13 19"><path d="M0 9.5h13" stroke="#50545a" stroke-width="1.5"/><path d="M6.5 0v5M6.5 14v5" stroke="#50545a" stroke-width="1.4"/><path d="M3.5 3.5L6.5 6.8 9.5 3.5zM3.5 15.5L6.5 12.2 9.5 15.5z" fill="#50545a"/></svg>
<svg style="left:873px;top:83px" width="8" height="4" viewBox="0 0 8 4"><path d="M0 0L4 4L8 0z" fill="#50545a"/></svg>
<svg style="left:892px;top:77px" width="15" height="14" viewBox="0 0 15 14"><path d="M1 0v14" stroke="#50545a" stroke-width="1.7"/><path d="M8 0v3.5M8 10.5v3.5" stroke="#50545a" stroke-width="2"/><path d="M3.5 7h8" stroke="#50545a" stroke-width="1.4"/><path d="M10.5 4l3.5 3-3.5 3z" fill="#50545a"/></svg>
<svg style="left:911px;top:83px" width="8" height="4" viewBox="0 0 8 4"><path d="M0 0L4 4L8 0z" fill="#50545a"/></svg>
<svg style="left:930px;top:77px" width="16" height="14" viewBox="0 0 16 14"><path d="M1 1.5l9 3.5-5 5z" fill="none" stroke="#50545a" stroke-width="1.4" stroke-linejoin="round"/><path d="M7 13L15 4" stroke="#50545a" stroke-width="1.5"/><path d="M15.5 2.5v4.5l-4-2z" fill="#50545a"/></svg>
<svg style="left:951px;top:83px" width="8" height="4" viewBox="0 0 8 4"><path d="M0 0L4 4L8 0z" fill="#50545a"/></svg>
<div class="a" style="left:968px;top:74px;width:1px;height:20px;background:#dadce0"></div>
<svg style="left:978px;top:79px" width="18" height="10" viewBox="0 0 18 10"><path d="M7.5 1.2H5a3.8 3.8 0 0 0 0 7.6h2.5M10.5 1.2H13a3.8 3.8 0 0 1 0 7.6h-2.5M5.5 5h7" fill="none" stroke="#50545a" stroke-width="1.8"/></svg>
<svg style="left:1008px;top:77px" width="15" height="15" viewBox="0 0 15 15"><path d="M1.5 0.8h12a.8.8 0 0 1 .8.8v8a.8.8 0 0 1-.8.8H4L0.8 13.5V1.6a.8.8 0 0 1 .7-.8z" fill="none" stroke="#50545a" stroke-width="1.5"/><path d="M7.5 2.7v5.6M4.7 5.5h5.6" stroke="#50545a" stroke-width="1.5"/></svg>
<svg style="left:1035px;top:76px" width="16" height="16" viewBox="0 0 16 16"><rect x="0.9" y="0.9" width="14.2" height="14.2" fill="none" stroke="#50545a" stroke-width="1.7"/><path d="M4.8 7v5.5M8 4v8.5M11.2 9v3.5" stroke="#50545a" stroke-width="1.7"/></svg>
<svg style="left:1065px;top:79px" width="15" height="11" viewBox="0 0 15 11"><path d="M1 1h13L8.5 7.2V11H6.5V7.2z" fill="none" stroke="#50545a" stroke-width="2" stroke-linejoin="round"/></svg>
<svg style="left:1090px;top:83px" width="8" height="4" viewBox="0 0 8 4"><path d="M0 0L4 4L8 0z" fill="#50545a"/></svg>
<div class="t" style="left:1110.5px;top:76.3px;font-size:17.5px;color:#50545a;transform:scaleX(.95);transform-origin:0 0;-webkit-text-stroke:.4px #50545a">Σ</div>
<svg style="left:1129.5px;top:84px" width="6" height="3" viewBox="0 0 8 4"><path d="M0 0L4 4L8 0z" fill="#50545a"/></svg>
<div class="a" style="left:1146px;top:74px;width:1px;height:20px;background:#dadce0"></div>
<div class="t" style="left:1158px;top:76px;font-weight:bold;font-size:16.5px;color:#000">Р</div>
<div class="t" style="left:1169px;top:81px;font-weight:bold;font-size:10.5px;color:#000">Y</div>
<svg style="left:1183.5px;top:85px" width="6" height="3" viewBox="0 0 8 4"><path d="M0 0L4 4L8 0z" fill="#50545a"/></svg>
<svg style="left:1838px;top:80px" width="12" height="7" viewBox="0 0 12 7"><path d="M1 6.5L6 1.5L11 6.5" fill="none" stroke="#50545a" stroke-width="1.8"/></svg>
<div class="hl" style="left:0;top:103px;width:1863px"></div>
<div class="t" style="letter-spacing:-0.31px;left:6px;top:109.5px;font-size:12.5px;color:#222">A1:E1</div>
<svg style="left:87px;top:114px" width="6" height="3" viewBox="0 0 6 3"><path d="M0 0L3 3L6 0z" fill="#666"/></svg>
<div class="a" style="left:100px;top:106px;width:1px;height:19px;background:#dadce0"></div>
<div class="t" style="left:113px;top:104px;font-style:italic;font-size:19px;color:#c0c0c0;font-family:Liberation Serif,serif">fx</div>
<div class="a" style="left:144px;top:106px;width:1px;height:19px;background:#dadce0"></div>
<div class="t" style="left:155px;top:109px;font-size:13px;letter-spacing:.15px;color:#222">Items Report: 2021/05/25</div>
<div class="a" style="left:1344px;top:128px;width:507px;height:400px;background:#f3f3f3"></div>
<div class="a" style="left:0;top:127px;width:1863px;height:1px;background:#c4c4c4"></div>
<div class="a" style="left:0;top:128px;width:43px;height:23px;background:#f8f9fa"></div>
<div class="ch s" style="left:44px;width:100px">A</div>
<div class="ch s" style="left:144px;width:140px">B</div>
<div class="ch s" style="left:284px;width:220px">C</div>
<div class="ch s" style="left:504px;width:120px">D</div>
<div class="ch s" style="left:624px;width:120px">E</div>
<div class="ch" style="left:744px;width:120px">F</div>
<div class="ch" style="left:864px;width:120px">G</div>
<div class="ch" style="left:984px;width:120px">H</div>
<div class="ch" style="left:1104px;width:120px">I</div>
<div class="ch" style="left:1224px;width:120px">J</div>
<div class="a" style="left:0;top:151px;width:1344px;height:1px;background:#c0c0c0"></div>
<div class="a" style="left:39px;top:128px;width:4px;height:24px;background:#bcbcbc"></div>
<div class="a" style="left:43px;top:127px;width:1px;height:401px;background:#c0c0c0"></div>
<div class="rh" style="top:152px;height:30px;line-height:29px;background:#e8eaed">1</div>
<div class="rh" style="top:182px;height:20px;line-height:20px;background:#f8f9fa"><span style="position:relative;top:0px">2</span></div>
<div class="rh" style="top:202px;height:21px;line-height:20px;background:#f8f9fa">3</div>
<div class="rh" style="top:226px;height:20px;line-height:19px;background:#f8f9fa">4</div>
<div class="rh" style="top:246px;height:20px;line-height:19px;background:#f8f9fa">5</div>
<div class="rh" style="top:266px;height:20px;line-height:19px;background:#f8f9fa">6</div>
<div class="rh" style="top:286px;height:20px;line-height:19px;background:#f8f9fa">7</div>
<div class="rh" style="top:306px;height:20px;line-height:19px;background:#f8f9fa">8</div>
<div class="rh" style="top:326px;height:20px;line-height:19px;background:#f8f9fa">9</div>
<div class="rh" style="top:346px;height:20px;line-height:19px;background:#f8f9fa">10</div>
<div class="rh" style="top:366px;height:20px;line-height:19px;background:#f8f9fa">11</div>
<div class="rh" style="top:386px;height:20px;line-height:19px;background:#f8f9fa">12</div>
<div class="rh" style="top:406px;height:20px;line-height:19px;background:#f8f9fa">13</div>
<div class="rh" style="top:426px;height:20px;line-height:19px;background:#f8f9fa">14</div>
<div class="rh" style="top:446px;height:20px;line-height:19px;background:#f8f9fa">15</div>
<div class="rh" style="top:466px;height:20px;line-height:19px;background:#f8f9fa">16</div>
<div class="rh" style="top:486px;height:20px;line-height:19px;background:#f8f9fa">17</div>
<div class="rh" style="top:506px;height:20px;line-height:19px;background:#f8f9fa">18</div>
<div class="rh" style="top:526px;height:20px;line-height:19px;background:#f8f9fa">19</div>
<div class="gvl" style="left:143px;top:151px;height:377px"></div>
<div class="gvl" style="left:283px;top:151px;height:377px"></div>
<div class="gvl" style="left:503px;top:151px;height:377px"></div>
<div class="gvl" style="left:623px;top:151px;height:377px"></div>
<div class="gvl" style="left:743px;top:151px;height:377px"></div>
<div class="gvl" style="left:863px;top:151px;height:377px"></div>
<div class="gvl" style="left:983px;top:151px;height:377px"></div>
<div class="gvl" style="left:1103px;top:151px;height:377px"></div>
<div class="gvl" style="left:1223px;top:151px;height:377px"></div>
<div class="gvl" style="left:1343px;top:151px;height:377px"></div>
<div class="ghl" style="left:44px;top:181px;width:1300px"></div>
<div class="ghl" style="left:44px;top:201px;width:1300px"></div>
<div class="ghl" style="left:44px;top:245px;width:1300px"></div>
<div class="ghl" style="left:44px;top:265px;width:1300px"></div>
<div class="ghl" style="left:44px;top:285px;width:1300px"></div>
<div class="ghl" style="left:44px;top:305px;width:1300px"></div>
<div class="ghl" style="left:44px;top:325px;width:1300px"></div>
<div class="ghl" style="left:44px;top:345px;width:1300px"></div>
<div class="ghl" style="left:44px;top:365px;width:1300px"></div>
<div class="ghl" style="left:44px;top:385px;width:1300px"></div>
<div class="ghl" style="left:44px;top:405px;width:1300px"></div>
<div class="ghl" style="left:44px;top:425px;width:1300px"></div>
<div class="ghl" style="left:44px;top:445px;width:1300px"></div>
<div class="ghl" style="left:44px;top:465px;width:1300px"></div>
<div class="ghl" style="left:44px;top:485px;width:1300px"></div>
<div class="ghl" style="left:44px;top:505px;width:1300px"></div>
<div class="ghl" style="left:44px;top:525px;width:1300px"></div>
<div class="a" style="left:0;top:222px;width:43px;height:4px;background:#bcbcbc"></div>
<div class="a" style="left:44px;top:222px;width:1300px;height:4px;background:#dfe1e6"></div>
<div class="a" style="left:45px;top:153px;width:698px;height:27px;background:#fff"></div>
<div class="c h" style="letter-spacing:0.17px;left:47px;top:158px;font-size:17px">Items Report: 2021/05/25</div>
<div class="a" style="left:43px;top:151px;width:702px;height:31px;border:2px solid #1a73e8"></div>
<div class="a" style="left:739px;top:177px;width:8px;height:8px;background:#1a73e8;border:1px solid #fff"></div>
<div class="c h" style="letter-spacing:-0.63px;left:47px;top:205.5px">UPC</div>
<div class="c h" style="letter-spacing:0.29px;left:147px;top:205.5px">Name</div>
<div class="c h" style="letter-spacing:-0.12px;left:287px;top:205.5px">Description</div>
<div class="c h" style="letter-spacing:-0.10px;left:507px;top:205.5px">Store</div>
<div class="c h" style="letter-spacing:-0.23px;left:627px;top:205.5px">Location</div>
<div class="c h" style="letter-spacing:-0.44px;left:747px;top:205.5px">Stock</div>
<div class="c h" style="letter-spacing:-0.82px;left:867px;top:205.5px">Class</div>
<div class="c h" style="letter-spacing:0.26px;left:987px;top:205.5px">Department</div>
<div class="c h" style="letter-spacing:-0.16px;left:1107px;top:205.5px">Category</div>
<div class="c h" style="letter-spacing:-0.19px;left:1227px;top:205.5px">Brand</div>
<div class="c" style="letter-spacing:0.10px;left:47px;top:230px">2999300051318</div>
<div class="c" style="letter-spacing:0.09px;left:147px;top:230px">0</div>
<div class="c" style="letter-spacing:0.50px;left:287px;top:230px">qewr</div>
<div class="c" style="left:507px;top:230px">Spring Valley</div>
<div class="c" style="letter-spacing:0.21px;left:627px;top:230px">pick loaction</div>
<div class="c r" style="letter-spacing:0.10px;left:744px;width:116px;top:230px">21</div>
<div class="c" style="letter-spacing:0.10px;left:47px;top:250px">8000500191712</div>
<div class="c" style="letter-spacing:0.10px;left:147px;top:250px">00</div>
<div class="c" style="left:507px;top:250px">Amazon</div>
<div class="c" style="letter-spacing:-0.04px;left:627px;top:250px">A-2</div>
<div class="c r" style="letter-spacing:0.10px;left:744px;width:116px;top:250px">34</div>
<div class="c" style="letter-spacing:0.20px;left:1107px;top:250px">Testk</div>
<div class="c" style="letter-spacing:0.11px;left:1227px;top:250px">TestBran3</div>
<div class="c" style="letter-spacing:0.10px;left:47px;top:270px">8000500191712</div>
<div class="c" style="letter-spacing:0.10px;left:147px;top:270px">00</div>
<div class="c" style="left:507px;top:270px">KateStore</div>
<div class="c" style="letter-spacing:0.08px;left:627px;top:270px">0.2</div>
<div class="c r" style="letter-spacing:0.09px;left:744px;width:116px;top:270px">100</div>
<div class="c" style="letter-spacing:0.20px;left:1107px;top:270px">Testk</div>
<div class="c" style="letter-spacing:0.11px;left:1227px;top:270px">TestBran3</div>
<div class="c" style="letter-spacing:0.10px;left:47px;top:290px">8000500191712</div>
<div class="c" style="letter-spacing:0.10px;left:147px;top:290px">00</div>
<div class="c" style="letter-spacing:0.30px;left:507px;top:290px">ktest-store</div>
<div class="c" style="left:627px;top:290px">NYtest</div>
<div class="c r" style="letter-spacing:0.09px;left:744px;width:116px;top:290px">3</div>
<div class="c" style="letter-spacing:0.20px;left:1107px;top:290px">Testk</div>
<div class="c" style="letter-spacing:0.11px;left:1227px;top:290px">TestBran3</div>
<div class="c" style="letter-spacing:0.10px;left:47px;top:310px">8000500191712</div>
<div class="c" style="letter-spacing:0.10px;left:147px;top:310px">00</div>
<div class="c" style="left:507px;top:310px">Spring Valley</div>
<div class="c" style="letter-spacing:0.11px;left:627px;top:310px">blue wagan</div>
<div class="c r" style="letter-spacing:0.58px;left:744px;width:116px;top:310px">11</div>
<div class="c" style="letter-spacing:0.20px;left:1107px;top:310px">Testk</div>
<div class="c" style="letter-spacing:0.11px;left:1227px;top:310px">TestBran3</div>
<div class="c" style="letter-spacing:0.10px;left:47px;top:330px">8000500191712</div>
<div class="c" style="letter-spacing:0.10px;left:147px;top:330px">00</div>
<div class="c" style="left:507px;top:330px">Spring Valley</div>
<div class="c" style="letter-spacing:0.29px;left:627px;top:330px">Default</div>
<div class="c r" style="letter-spacing:0.42px;left:744px;width:116px;top:330px">112</div>
<div class="c" style="letter-spacing:0.20px;left:1107px;top:330px">Testk</div>
<div class="c" style="letter-spacing:0.11px;left:1227px;top:330px">TestBran3</div>
<div class="c" style="letter-spacing:0.10px;left:47px;top:350px">8000500191712</div>
<div class="c" style="letter-spacing:0.10px;left:147px;top:350px">00</div>
<div class="c" style="left:507px;top:350px">Spring Valley</div>
<div class="c" style="letter-spacing:0.21px;left:627px;top:350px">pick loaction</div>
<div class="c r" style="letter-spacing:0.07px;left:744px;width:116px;top:350px">189,5</div>
<div class="c" style="letter-spacing:0.20px;left:1107px;top:350px">Testk</div>
<div class="c" style="letter-spacing:0.11px;left:1227px;top:350px">TestBran3</div>
<div class="c" style="letter-spacing:0.10px;left:47px;top:370px">32132132132</div>
<div class="c" style="letter-spacing:0.10px;left:147px;top:370px">0001</div>
<div class="c" style="letter-spacing:-0.41px;left:287px;top:370px">asds</div>
<div class="c" style="left:507px;top:370px">Amazon</div>
<div class="c" style="letter-spacing:-0.04px;left:627px;top:370px">A-1</div>
<div class="c r" style="letter-spacing:0.10px;left:744px;width:116px;top:370px">60</div>
<div class="c" style="letter-spacing:0.10px;left:47px;top:390px">32132132132</div>
<div class="c" style="letter-spacing:0.10px;left:147px;top:390px">0001</div>
<div class="c" style="letter-spacing:-0.41px;left:287px;top:390px">asds</div>
<div class="c" style="left:507px;top:390px">KateStore</div>
<div class="c" style="letter-spacing:0.08px;left:627px;top:390px">0.2</div>
<div class="c r" style="letter-spacing:0.09px;left:744px;width:116px;top:390px">1</div>
<div class="c" style="letter-spacing:0.10px;left:47px;top:410px">32132132132</div>
<div class="c" style="letter-spacing:0.10px;left:147px;top:410px">0001</div>
<div class="c" style="letter-spacing:-0.41px;left:287px;top:410px">asds</div>
<div class="c" style="left:507px;top:410px">Kharkiv</div>
<div class="c" style="letter-spacing:-0.34px;left:627px;top:410px">KH-1</div>
<div class="c r" style="letter-spacing:0.09px;left:744px;width:116px;top:410px">5</div>
<div class="c" style="letter-spacing:0.10px;left:47px;top:430px">32132132132</div>
<div class="c" style="letter-spacing:0.10px;left:147px;top:430px">0001</div>
<div class="c" style="letter-spacing:-0.41px;left:287px;top:430px">asds</div>
<div class="c" style="letter-spacing:-0.19px;left:507px;top:430px">Kiev</div>
<div class="c" style="letter-spacing:-0.33px;left:627px;top:430px">K-1</div>
<div class="c r" style="letter-spacing:0.09px;left:744px;width:116px;top:430px">1</div>
<div class="c" style="letter-spacing:0.10px;left:47px;top:450px">32132132132</div>
<div class="c" style="letter-spacing:0.10px;left:147px;top:450px">0001</div>
<div class="c" style="letter-spacing:-0.41px;left:287px;top:450px">asds</div>
<div class="c" style="letter-spacing:-0.99px;left:507px;top:450px">NJ</div>
<div class="c" style="letter-spacing:0.10px;left:627px;top:450px">101-1</div>
<div class="c r" style="letter-spacing:0.10px;left:744px;width:116px;top:450px">80</div>
<div class="c" style="letter-spacing:0.10px;left:47px;top:470px">32132132132</div>
<div class="c" style="letter-spacing:0.10px;left:147px;top:470px">0001</div>
<div class="c" style="letter-spacing:-0.41px;left:287px;top:470px">asds</div>
<div class="c" style="left:507px;top:470px">Spring Valley</div>
<div class="c" style="letter-spacing:0.10px;left:627px;top:470px">1-1</div>
<div class="c r" style="letter-spacing:0.07px;left:744px;width:116px;top:470px">83,5</div>
<div class="c" style="letter-spacing:0.10px;left:47px;top:490px">32132132132</div>
<div class="c" style="letter-spacing:0.10px;left:147px;top:490px">0001</div>
<div class="c" style="letter-spacing:-0.41px;left:287px;top:490px">asds</div>
<div class="c" style="left:507px;top:490px">Spring Valley</div>
<div class="c" style="letter-spacing:0.11px;left:627px;top:490px">blue wagan</div>
<div class="c r" style="letter-spacing:0.07px;left:744px;width:116px;top:490px">236,5</div>
<div class="c" style="letter-spacing:0.10px;left:47px;top:510px">32132132132</div>
<div class="c" style="letter-spacing:0.10px;left:147px;top:510px">0001</div>
<div class="c" style="letter-spacing:-0.41px;left:287px;top:510px">asds</div>
<div class="c" style="left:507px;top:510px">Spring Valley</div>
<div class="c" style="letter-spacing:0.21px;left:627px;top:510px">pick loaction</div>
<div class="c r" style="letter-spacing:0.10px;left:744px;width:116px;top:510px">45</div>
<div class="a" style="left:1850px;top:127px;width:13px;height:401px;background:#f8f9fa;border-left:1px solid #dcdcdc"></div>
<div class="a" style="left:1851px;top:222px;width:12px;height:3px;background:#e3e5e8"></div>
<div class="a" style="left:1853px;top:227px;width:8px;height:26px;border-radius:4px;background:#dadce0"></div>
<div class="a" style="left:1862px;top:66px;width:58px;height:462px;background:#fff;border-left:1px solid #dadce0"></div>
<div class="a" style="left:1918px;top:0;width:1px;height:528px;background:#dadce0"></div>
<svg style="left:1881.5px;top:84px" width="18.5" height="18.5" viewBox="0 0 20 20"><rect x="0" y="0" width="20" height="20" rx="2.5" fill="#4285f4"/><path d="M0 15h15v5H2.5A2.5 2.5 0 0 1 0 17.5z" fill="#34a853"/><path d="M15 0h2.5A2.5 2.5 0 0 1 20 2.5V5h-5z" fill="#1967d2"/><path d="M15 5h5v10h-5z" fill="#fbbc04"/><path d="M15 15h5l-5 5z" fill="#ea4335"/><rect x="4" y="4" width="12" height="12" fill="#fff"/><text x="10" y="13.5" text-anchor="middle" font-family="Liberation Sans,sans-serif" font-weight="bold" font-size="8.5" fill="#4285f4">31</text></svg>
<svg style="left:1881.5px;top:139.5px" width="18.5" height="18.5" viewBox="0 0 20 20"><rect width="20" height="20" rx="2" fill="#fbbc04"/><path d="M10 4.5a4.3 4.3 0 0 1 2.3 7.9v1.1H7.7v-1.1A4.3 4.3 0 0 1 10 4.5z" fill="#fff"/><rect x="7.7" y="14.5" width="4.6" height="1.2" fill="#fff"/></svg>
<svg style="left:1881.5px;top:196px" width="18.5" height="18.5" viewBox="0 0 20 20"><circle cx="10" cy="10" r="10" fill="#4285f4"/><path d="M8 13.5L14.5 6" stroke="#fff" stroke-width="3" stroke-linecap="round"/><circle cx="5" cy="10.5" r="1.7" fill="#fbbc04"/></svg>
<div class="a" style="left:5px;top:191px;width:1408px;height:38px;border:4px solid #fb5848;box-shadow:1.5px 2px 2.5px rgba(0,0,0,.85),inset 1.5px 2px 2.5px rgba(0,0,0,.85)"></div>
</div></body></html>
